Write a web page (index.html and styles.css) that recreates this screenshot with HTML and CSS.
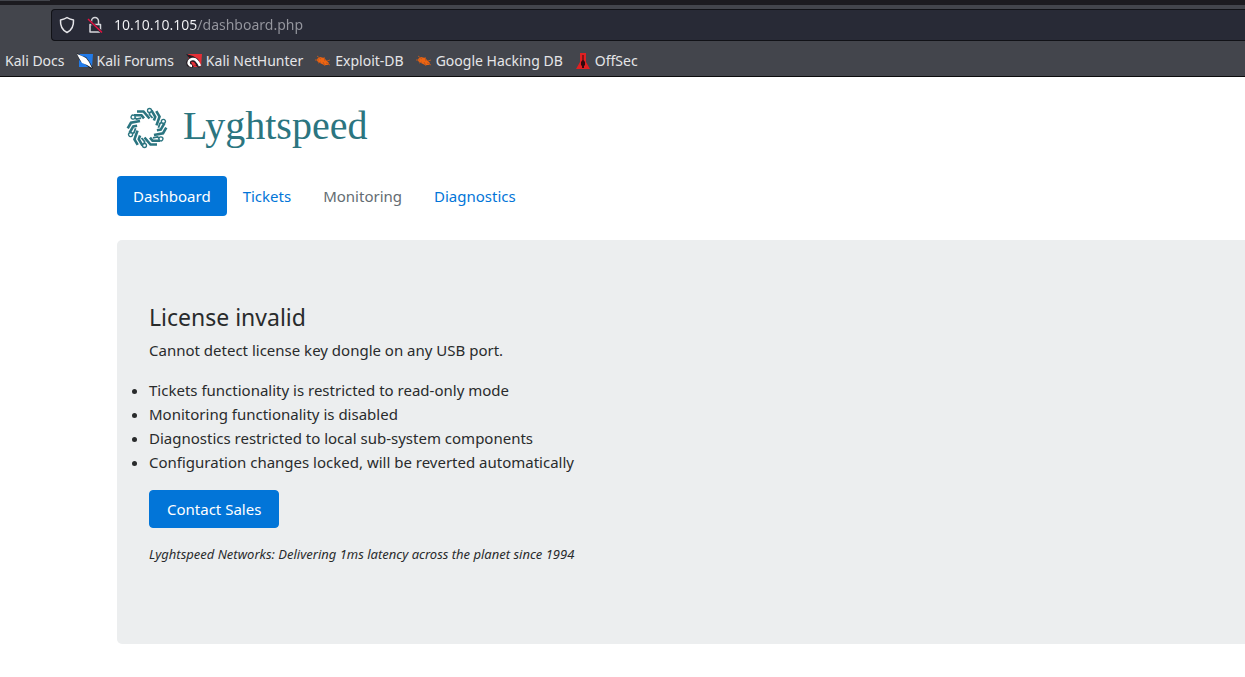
FILE: index.html
```
<!DOCTYPE html>
<html lang="en">
<head>
<meta charset="utf-8">
<title>Lyghtspeed</title>
<link rel="stylesheet" href="styles.css">
</head>
<body>
<header class="chrome">
  <div class="tabstrip"><span class="tab-edge"></span></div>
  <div class="toolbar">
    <div class="urlbar">
      <svg class="url-icon" viewBox="0 0 18 18" aria-hidden="true"><path d="M9 1.500c2 1.600 4 2 6.500 2.500C15.800 9.500 14.300 14 9 16.500 3.700 14 2.200 9.500 2.500 4 5 3.500 7 3.100 9 1.500z" fill="none" stroke="#e6e6ea" stroke-width="1.500" stroke-linejoin="round"/></svg>
      <svg class="url-icon" viewBox="0 0 18 18" aria-hidden="true"><path d="M5.500 8.500V5a3.500 3.500 0 0 1 7 0v3.500M4 8.500h10.500v7.500H4z" fill="none" stroke="#d6d6db" stroke-width="1.500" stroke-linejoin="round"/><path d="M2 3.500l14 13" stroke="#282a36" stroke-width="3"/><path d="M2 3l14 13.500" stroke="#e5103f" stroke-width="1.500"/></svg>
      <input class="url" type="text" aria-label="Address" value="10.10.10.105/dashboard.php">
    </div>
  </div>
  <nav class="bookmarks" aria-label="Bookmarks">
    <a href="#">Kali Docs</a>
    <a href="#"><svg viewBox="0 0 16 16" aria-hidden="true"><path d="M2 1h14l-1 13H2z" fill="#217bea"/><path d="M0 0l5 3 4 1 3 4 4 7-2 1-5-4-6-4-2-4z" fill="#171d27"/><path d="M0 1l5 2 4 2 3 4 3 6-5-3-5-2-3-5z" fill="#fff"/></svg>Kali Forums</a>
    <a href="#"><svg viewBox="0 0 16 16" aria-hidden="true"><path d="M2 1h14l-1 13H3z" fill="#e52f36"/><path d="M0 1l7 2 5 3 3 7-2 2-4-3-3 3-5-2-1-4 3-4z" fill="#241a20"/><path d="M6 13c-3 0-4-3-3-5s5-3 7-1 3 3 4 6" fill="none" stroke="#fff" stroke-width="2.500"/><path d="M5 9c2-1 4 0 5 3l-3 1z" fill="#e52f36"/></svg>Kali NetHunter</a>
    <a href="#"><svg viewBox="0 0 16 16" aria-hidden="true"><path d="M2 6l3-2 4 1 3 3 2 2-1 2-4 0-4-2-3-2z" fill="#ee6411"/><path d="M2 3l4 3M0 7h4M3 10l3-1M9 4l1 4M8 9l2 4M11 10l4 2M12 8l3-1" stroke="#b9571f"/></svg>Exploit-DB</a>
    <a href="#"><svg viewBox="0 0 16 16" aria-hidden="true"><path d="M2 6l3-2 4 1 3 3 2 2-1 2-4 0-4-2-3-2z" fill="#ee6411"/><path d="M2 3l4 3M0 7h4M3 10l3-1M9 4l1 4M8 9l2 4M11 10l4 2M12 8l3-1" stroke="#b9571f"/></svg>Google Hacking DB</a>
    <a href="#"><svg viewBox="0 0 16 16" aria-hidden="true"><path d="M5 0h6v9l4 7H1l4-7z" fill="#df2022"/><path d="M7.500 2h1v5l1.500 2v3l-1 1v2H7v-2l-1-1V9l1.500-2z" fill="#31090d"/></svg>OffSec</a>
  </nav>
</header>
<main class="page">
  <a class="brand" href="#">
    <svg class="mark" viewBox="-21 -21 42 42" aria-hidden="true">
      <defs>
        <g id="blade" fill="none" stroke="#2b7580">
          <path d="M-10 -16.500h6.500l6 7" stroke-width="2.600"/>
          <path d="M-13 -12.700h7.500l2.500 3" stroke-width="2.600"/>
          <path d="M2.500 -16v2.500l3 3.500" stroke-width="1.800"/>
          <circle cx="2.500" cy="-17.500" r="2" stroke-width="1.300" fill="#fff"/>
        </g>
      </defs>
      <use href="#blade"/>
      <use href="#blade" transform="rotate(60)"/>
      <use href="#blade" transform="rotate(120)"/>
      <use href="#blade" transform="rotate(180)"/>
      <use href="#blade" transform="rotate(240)"/>
      <use href="#blade" transform="rotate(300)"/>
    </svg>
    <span class="wordmark">Lyghtspeed</span>
  </a>
  <nav class="pills">
    <a class="pill active" href="#">Dashboard</a>
    <a class="pill" href="#">Tickets</a>
    <a class="pill disabled" aria-disabled="true">Monitoring</a>
    <a class="pill" href="#">Diagnostics</a>
  </nav>
  <section class="notice">
    <h1>License invalid</h1>
    <p>Cannot detect license key dongle on any USB port.</p>
    <ul>
      <li>Tickets functionality is restricted to read-only mode</li>
      <li>Monitoring functionality is disabled</li>
      <li>Diagnostics restricted to local sub-system components</li>
      <li>Configuration changes locked, will be reverted automatically</li>
    </ul>
    <button class="contact" type="button">Contact Sales</button>
    <p class="tagline">Lyghtspeed Networks: Delivering 1ms latency across the planet since 1994</p>
  </section>
</main>
</body>
</html>
```
FILE: styles.css
```
* { box-sizing: border-box; }
body {
  margin: 0;
  background: #fff;
  color: #292b2c;
  font: 15px/24px "Noto Sans", sans-serif;
}
a { color: #0275d8; text-decoration: none; }
.chrome {
  background: #43454c;
  border-bottom: 1px solid #0c0c0d;
}
.tabstrip { height: 5px; background: #1c1b20; }
.tab-edge { display: block; width: 50px; height: 1px; background: #43454c; }
.toolbar { padding: 4px 0 0 51px; }
.urlbar {
  display: flex;
  align-items: center;
  gap: 10px;
  height: 32px;
  padding-left: 6px;
  background: #282a36;
  border: 1px solid #111217;
  border-right: 0;
  border-radius: 4px 0 0 4px;
}
.url-icon { width: 18px; height: 18px; flex: none; }
.url {
  flex: 1;
  min-width: 0;
  padding: 0;
  border: 0;
  outline: 0;
  font: inherit;
  font-size: 14px;
  color: transparent;
  background: linear-gradient(90deg, #f5f5f8 84px, #96979f 84px);
  -webkit-background-clip: text;
  background-clip: text;
}
.bookmarks {
  display: flex;
  gap: 12px;
  height: 35px;
  padding: 4px 0 0 5px;
  align-items: center;
  font-size: 14px;
  white-space: nowrap;
}
.bookmarks a { display: flex; align-items: center; gap: 4px; color: #e5e5e8; }
.bookmarks svg { width: 16px; height: 16px; }
.page { padding: 26px 0 33px 117px; }
.brand { display: flex; align-items: center; gap: 15px; height: 49px; padding-left: 9px; }
.mark { width: 42px; height: 42px; }
.wordmark { padding-bottom: 4px; font: 40px/44px "Liberation Serif", serif; color: #2b7580; }
.pills { display: flex; margin: 24px 0; }
.pill { padding: 8px 16px; border-radius: 4px; }
.pill.active { background: #0275d8; color: #fff; }
.pill.disabled { color: #636c72; }
.notice {
  padding: 64px 32px;
  background: #eceeef;
  border-radius: 5px 0 0 5px;
}
.notice h1 { margin: 0 0 8px; font-size: 23px; font-weight: 400; line-height: 26px; }
.notice p { margin: 0 0 16px; }
.notice ul { margin: 0 0 16px; padding: 0; }
.contact {
  display: block;
  padding: 6px 17px;
  border: 1px solid #0275d8;
  border-radius: 4px;
  background: #0275d8;
  color: #fff;
  font: inherit;
}
.notice .tagline { margin: 16px 0; font-size: 13px; font-style: italic; line-height: 20px; }
```
